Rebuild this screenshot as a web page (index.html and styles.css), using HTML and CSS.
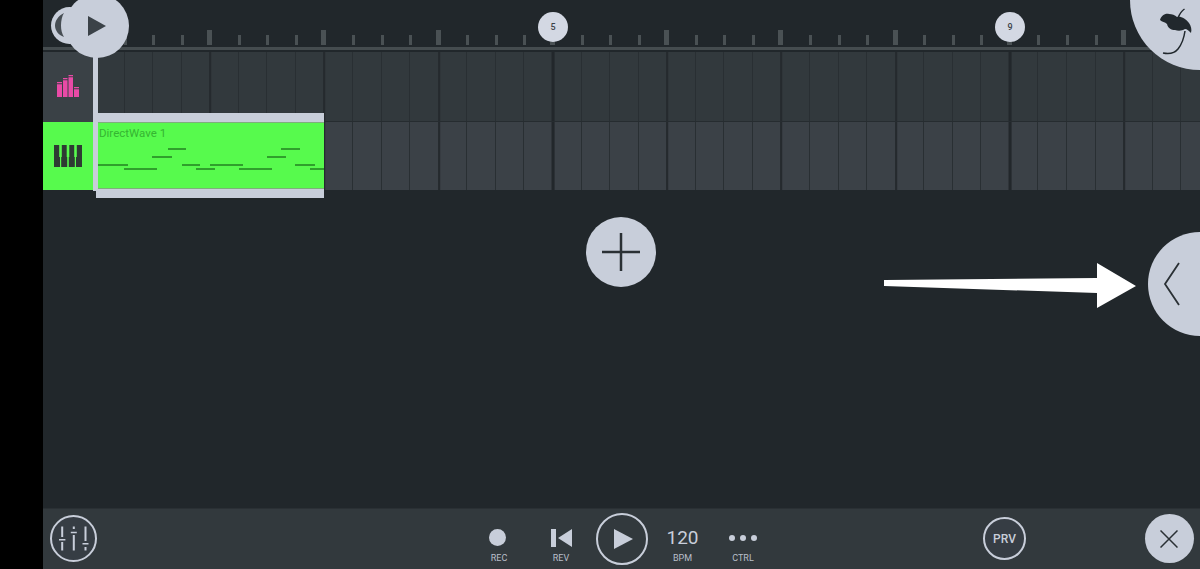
FILE: index.html
```html
<!DOCTYPE html>
<html lang="en">
  <head>
    <meta charset="UTF-8" />
    <meta name="viewport" content="width=device-width, initial-scale=1.0" />
    <title>FL Studio Mobile</title>
    <link rel="stylesheet" href="styles.css">
  </head>
  <body>
    <div class="bezel"></div>
    <div class="app">
      <div class="ruler">
        <div class="ticks"></div>
        <div class="ruler-line"></div>
      </div>

      <div class="track">
        <div class="track-head">
          <svg class="meter-icon" width="22" height="22" viewBox="0 0 22 22">
            <path fill="#e84aa6" d="M0 7h5v1.200H0zM0 9.200h5V22H0zM6 3h4.500v1.200H6zM6 5.200h4.500V22H6zM11.500 0H16v1.200h-4.500zM11.500 2.200H16V22h-4.500zM17 12h5v1.200h-5zM17 14.200h5V22h-5z"/>
          </svg>
        </div>
        <div class="track-grid"></div>
      </div>
      <div class="track track-second">
        <div class="track-head track-head-on">
          <svg width="28" height="22" viewBox="0 0 28 22">
            <path fill="#2e3b33" d="M0 0h5.200v12H6v10H0zM7.800 0h4.900v12h.5v10h-6V12h.6zM15.300 0h4.900v12h.6v10h-6V12h.5zM22.800 0H28v22h-6V12h.8z"/>
          </svg>
        </div>
        <div class="track-grid"></div>
      </div>

      <div class="arrange"></div>

      <div class="toolbar">
        <button class="ring mixer">
          <svg width="36" height="30" viewBox="0 0 36 30" fill="none" stroke="#c8ceda" stroke-width="2">
            <path d="M6.200 2.500V13M6.200 18v8.500M17.800 2.500V5M17.800 11v15.500M29.500 2.500V17M29.500 23v3.500"/>
            <path stroke-width="1.500" d="M3 15.800h6.400M14.800 8.500h6M26.500 19.800h6"/>
          </svg>
        </button>
        <div class="transport">
          <div class="tool">
            <span class="tool-main"><span class="rec-dot"></span></span>
            <span class="tool-label">REC</span>
          </div>
          <div class="tool">
            <span class="tool-main">
              <svg width="21" height="18" viewBox="0 0 21 18"><path fill="#c8ceda" d="M0 0h5v18H0zM21 0v18L7 9z"/></svg>
            </span>
            <span class="tool-label">REV</span>
          </div>
          <div class="tool tool-play">
            <button class="ring play-big">
              <svg width="19" height="20" viewBox="0 0 19 20"><path fill="#c8ceda" d="M0 0l19 10L0 20z"/></svg>
            </button>
          </div>
          <div class="tool">
            <span class="tool-main bpm">120</span>
            <span class="tool-label">BPM</span>
          </div>
          <div class="tool">
            <span class="tool-main dots"><i></i><i></i><i></i></span>
            <span class="tool-label">CTRL</span>
          </div>
        </div>
        <button class="ring prv">PRV</button>
        <button class="close">
          <svg width="18" height="18" viewBox="0 0 18 18" fill="none" stroke="#2a3034" stroke-width="1.500"><path d="M0.500 0.500l17 17M17.500 0.500l-17 17"/></svg>
        </button>
      </div>
    </div>

    <!-- things floating over the arrangement -->
    <div class="overlays">
      <div class="bar-pin bar-five">5</div>
      <div class="bar-pin bar-nine">9</div>

      <div class="clip">
        <div class="clip-body">
          <span class="clip-name">DirectWave 1</span>
          <svg class="clip-notes" width="228" height="67" viewBox="96 122 228 67">
            <path stroke="#2f9f2c" stroke-width="2" fill="none" d="M168 149h18M281 149h19M152 157h20M267 157h19M98 165h30M182 165h18M210 165h33M295 165h20M124 169h33M196 169h19M239 169h33M310 169h14"/>
          </svg>
        </div>
      </div>
      <div class="playhead"></div>

      <div class="back-btn">
        <svg width="37" height="37" viewBox="0 0 37 37"><path fill="#474e54" d="M13 6C7 9 4 14 4 18.500S7 28 13 30c-2-3-3-7-3-11.500S11 9 13 6z"/></svg>
      </div>
      <div class="play-btn">
        <svg width="18" height="20" viewBox="0 0 18 20"><path fill="#3b4248" d="M0 0l18 10L0 20z"/></svg>
      </div>
      <div class="logo-btn">
        <svg width="40" height="50" viewBox="1158 6 40 50">
          <path fill="#21282d" d="M1160 20C1161 16 1165 13 1169 14C1172 14 1175 15 1177 17C1181 16 1186 19 1189 23C1191 26 1192 29 1191 33C1189 31 1187 29 1185 29C1182 31 1178 31 1175 30C1171 30 1168 28 1167 24C1165 22 1162 22 1160 20z"/>
          <path fill="none" stroke="#21282d" stroke-width="1.500" d="M1184.500 9c-3 2-5 5-6.500 9M1185 31c-1 7-3 13-7 18-4 5-10 5-15 4"/>
        </svg>
      </div>
      <button class="add-btn">
        <svg width="38" height="38" viewBox="0 0 38 38" fill="none" stroke="#2a3034" stroke-width="2.500"><path d="M19 0v38M0 19h38"/></svg>
      </button>
      <div class="side-btn">
        <svg width="18" height="44" viewBox="0 0 18 44" fill="none" stroke="#2a3034" stroke-width="1.800"><path d="M16 1L2 22l14 21"/></svg>
      </div>
      <svg class="arrow" width="254" height="47" viewBox="0 0 254 47">
        <path fill="#fff" d="M0 17h1L213 15V0l39 23-39 22V30L0 23z"/>
      </svg>
    </div>
  </body>
</html>
```

FILE: styles.css
```css
* {
  box-sizing: border-box;
}
html,
body {
  height: 100%;
}
body {
  margin: 0;
  display: flex;
  overflow: hidden;
  background: #000;
  font-family: Roboto, "Liberation Sans", sans-serif;
  color: #c8ceda;
}
button {
  padding: 0;
  border: none;
  background: none;
  color: inherit;
  font-family: inherit;
}
svg {
  display: block;
}
.bezel {
  width: 43px;
  flex-shrink: 0;
}
.app {
  flex: 1;
  display: flex;
  flex-direction: column;
  background: #21272b;
}

/* ruler */
.ruler {
  height: 52px;
  padding-top: 30px;
}
.ticks {
  height: 15px;
  margin-left: 49.500px;
  background-image:
    repeating-linear-gradient(90deg, #4a5154 0, #4a5154 5px, transparent 5px, transparent 114.24px),
    linear-gradient(#21272b 5px, transparent 5px),
    repeating-linear-gradient(90deg, transparent 0, transparent 2px, #4a5154 2px, #4a5154 5px, transparent 5px, transparent 28.56px);
}
.ruler-line {
  height: 3px;
  margin-top: 2px;
  background: #454c4f;
}

/* tracks */
.track {
  height: 70px;
  display: flex;
  background: #32393d;
}
.track-second {
  height: 68px;
  background: #3b4147;
}
.track-head {
  width: 50px;
  flex-shrink: 0;
  display: flex;
  align-items: center;
  justify-content: center;
  background: #3a4146;
}
.track-head-on {
  background: #57fa4d;
}
.meter-icon {
  margin-bottom: 2px;
}
.track-grid {
  flex: 1;
  border-bottom: 1px solid #262c30;
  background-image:
    repeating-linear-gradient(90deg, transparent 0, transparent 454px, #22272b 454px, #22272b 456.96px),
    repeating-linear-gradient(90deg, transparent 0, transparent 112.24px, #252a2e 112.24px, #252a2e 114.24px),
    repeating-linear-gradient(90deg, transparent 0, transparent 27.56px, #292f33 27.56px, #292f33 28.56px);
  background-position: 4.500px 0, 4.260px 0, 3px 0;
}
.track-second .track-grid {
  border-bottom: none;
}

.arrange {
  flex: 1;
}

/* bottom toolbar */
.toolbar {
  height: 61px;
  display: flex;
  align-items: center;
  padding-bottom: 1px;
  background: #32393d;
  border-top: 1px solid #2a3034;
}
.ring {
  display: flex;
  align-items: center;
  justify-content: center;
  border: 2px solid #c8ceda;
  border-radius: 50%;
  background: #363d44;
}
.mixer {
  width: 47px;
  height: 47px;
  margin-left: 7px;
}
.transport {
  display: grid;
  grid-template-columns: 62px 62px 60px 61px 60px;
  margin-left: 371px;
}
.tool {
  height: 60px;
  padding-top: 19px;
  display: flex;
  flex-direction: column;
  align-items: center;
}
.tool-play {
  padding-top: 0;
  justify-content: center;
}
.tool-main {
  height: 20px;
  display: flex;
  align-items: center;
  justify-content: center;
}
.tool-label {
  margin-top: 5px;
  font-size: 9px;
  line-height: 11px;
  color: #b9bfca;
}
.rec-dot {
  width: 17px;
  height: 17px;
  margin-right: 3px;
  border-radius: 50%;
  background: #c8ceda;
}
.play-big {
  width: 52px;
  height: 52px;
  padding-left: 3px;
  background: none;
}
.bpm {
  font-size: 19px;
}
.dots {
  gap: 5px;
}
.dots i {
  width: 6px;
  height: 6px;
  border-radius: 50%;
  background: #c8ceda;
}
.prv {
  width: 43px;
  height: 43px;
  margin-left: 210px;
  font-size: 12px;
  font-weight: 500;
}
.close {
  width: 49px;
  height: 49px;
  margin-left: 119px;
  padding-right: 2px;
  display: flex;
  align-items: center;
  justify-content: center;
  border-radius: 50%;
  background: #c8ceda;
}

/* overlays */
.overlays {
  position: absolute;
  inset: 0;
  overflow: hidden;
}
.bar-pin {
  position: absolute;
  top: 12px;
  width: 30px;
  height: 30px;
  border-radius: 50%;
  background: #d3d8e3;
  color: #3b4248;
  font-size: 9px;
  font-weight: 500;
  line-height: 30px;
  text-align: center;
}
.bar-five {
  left: 538px;
}
.bar-nine {
  left: 995px;
}
.clip {
  position: absolute;
  left: 96px;
  top: 113px;
  width: 228px;
  height: 85px;
  padding: 9px 0;
  background: #c8ceda;
}
.clip-body {
  position: relative;
  height: 67px;
  background: #57fa4d;
  border-top: 1px solid #7fae7c;
  border-bottom: 1px solid #7fae7c;
}
.clip-name {
  position: absolute;
  left: 3px;
  top: 3px;
  font-size: 11.500px;
  line-height: 14px;
  color: #35b532;
}
.clip-notes {
  position: absolute;
  left: 0;
  top: -1px;
}
.playhead {
  position: absolute;
  left: 93px;
  top: 50px;
  width: 5px;
  height: 141px;
  background: #c8ceda;
}
.back-btn,
.play-btn,
.logo-btn,
.add-btn,
.side-btn {
  position: absolute;
  display: flex;
  align-items: center;
  justify-content: center;
  border-radius: 50%;
  background: #c8ceda;
}
.back-btn {
  left: 51px;
  top: 7px;
  width: 37px;
  height: 37px;
}
.play-btn {
  left: 65px;
  top: -6px;
  width: 64px;
  height: 64px;
}
.logo-btn {
  left: 1130px;
  top: 0;
  width: 70px;
  height: 70px;
  padding: 6px 2px 0 28px;
  align-items: flex-start;
  border-radius: 0 0 0 70px;
}
.add-btn {
  left: 586px;
  top: 217px;
  width: 70px;
  height: 70px;
}
.side-btn {
  left: 1148px;
  top: 232px;
  width: 52px;
  height: 104px;
  padding-left: 15px;
  justify-content: flex-start;
  border-radius: 52px 0 0 52px;
}
.arrow {
  position: absolute;
  left: 884px;
  top: 263px;
}
```
